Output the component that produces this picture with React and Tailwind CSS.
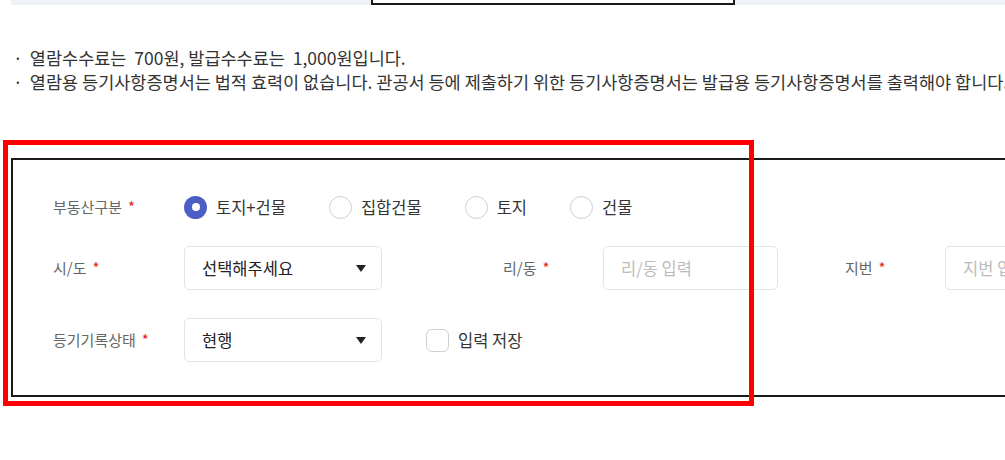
import React from "react";

const font = { fontFamily: '"Noto Sans CJK KR", "Noto Sans", sans-serif' };

const Label = ({ text, className = "" }) => (
  <div className={"shrink-0 text-[15px] text-[#666] " + className}>
    {text}
    <span className="ml-[6px] text-[#e02424]">*</span>
  </div>
);

const Radio = ({ label, checked }) => (
  <label className="flex items-center gap-[9px]">
    {checked ? (
      <span className="flex h-[23px] w-[23px] items-center justify-center rounded-full bg-[#4c5ec6]">
        <span className="h-[8px] w-[8px] rounded-full bg-white" />
      </span>
    ) : (
      <span className="h-[23px] w-[23px] rounded-full border border-[#cfcfcf] bg-white" />
    )}
    <span className="text-[16.5px] text-[#333]">{label}</span>
  </label>
);

const Select = ({ value }) => (
  <div className="flex h-[44px] w-[198px] shrink-0 items-center justify-between rounded-[5px] border border-[#e3e3e3] bg-white pl-[17px] pr-[15px]">
    <span className="text-[16.5px] text-[#222]">{value}</span>
    <svg width="10" height="7" viewBox="0 0 10 7">
      <polygon points="0,0 10,0 5,7" fill="#222" />
    </svg>
  </div>
);

const Input = ({ placeholder }) => (
  <div className="flex h-[44px] w-[175px] shrink-0 items-center rounded-[5px] border border-[#e3e3e3] bg-white pl-[17px]">
    <span className="whitespace-nowrap text-[16.5px] text-[#bbb]">{placeholder}</span>
  </div>
);

export default function App() {
  return (
    <div className="relative h-[460px] w-[1005px] overflow-hidden bg-white" style={font}>
      {/* tabs */}
      <div className="ml-[11px] flex h-[5px] bg-[#eef1f5]">
        <div className="w-[360px]" />
        <div className="h-[5px] w-[364px] border-x-2 border-b-2 border-[#1a1a1a] bg-white" />
      </div>

      {/* notice */}
      <ul className="mt-[41px] whitespace-nowrap pl-[13px] text-[17.5px] leading-[24px] text-[#333]">
        <li>
          <span className="mr-[7px]">·</span>열람수수료는{"\u00a0\u00a0"}700원, 발급수수료는{"\u00a0\u00a0"}1,000원입니다.
        </li>
        <li>
          <span className="mr-[7px]">·</span>열람용 등기사항증명서는 법적 효력이 없습니다. 관공서 등에 제출하기 위한 등기사항증명서는 발급용 등기사항증명서를 출력해야 합니다.
        </li>
      </ul>

      {/* form */}
      <div className="ml-[11px] mt-[64px] w-[1100px] border-2 border-[#1a1a1a] pb-[33px] pl-[40px] pt-[25px]">
        <div className="flex h-[44px] items-center">
          <Label text="부동산구분" className="w-[131px]" />
          <div className="flex items-center gap-[43px]">
            <Radio label="토지+건물" checked />
            <Radio label="집합건물" />
            <Radio label="토지" />
            <Radio label="건물" />
          </div>
        </div>

        <div className="mt-[17px] flex h-[44px] items-center">
          <Label text="시/도" className="w-[131px]" />
          <Select value="선택해주세요" />
          <Label text="리/동" className="ml-[121px] w-[100px]" />
          <Input placeholder="리/동 입력" />
          <Label text="지번" className="ml-[67px] w-[100px]" />
          <Input placeholder="지번 입력" />
        </div>

        <div className="mt-[28px] flex h-[44px] items-center">
          <Label text="등기기록상태" className="w-[131px]" />
          <Select value="현행" />
          <label className="ml-[44px] flex items-center gap-[9px]">
            <span className="h-[23px] w-[23px] rounded-[6px] border border-[#cfcfcf] bg-white" />
            <span className="text-[16.5px] text-[#333]">입력 저장</span>
          </label>
        </div>
      </div>

      {/* highlight */}
      <div className="absolute left-[3px] top-[140px] h-[266px] w-[751px] border-[5px] border-[#ff0000]" />
    </div>
  );
}
